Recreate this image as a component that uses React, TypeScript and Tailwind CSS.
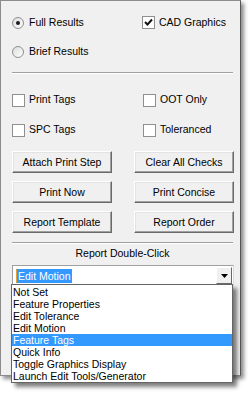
import React from "react";

const font = { fontFamily: '"Liberation Sans", Arial, sans-serif' };

function Radio({ checked, label }: { checked?: boolean; label: string }) {
  return (
    <label className="flex items-center gap-[5px]">
      <span className="relative w-[12px] h-[12px] rounded-full border border-[#8f8f8f] bg-gradient-to-br from-[#dcdcdc] to-white flex items-center justify-center">
        {checked && <span className="w-[4px] h-[4px] rounded-full bg-[#1a1a1a]" />}
      </span>
      <span>{label}</span>
    </label>
  );
}

function Check({ checked, label }: { checked?: boolean; label: string }) {
  return (
    <label className="flex items-center gap-[4px]">
      <span className="w-[13px] h-[13px] border border-[#8f8f8f] bg-white flex items-center justify-center">
        {checked && (
          <svg width="9" height="9" viewBox="0 0 9 9">
            <path d="M1 4 L3.5 6.5 L8 1.5" stroke="#111" strokeWidth="1.9" fill="none" />
          </svg>
        )}
      </span>
      <span>{label}</span>
    </label>
  );
}

function Btn({ label }: { label: string }) {
  return (
    <button className="w-[100px] h-[22px] bg-[#f0f0f0] border border-t-white border-l-white border-r-[#696969] border-b-[#696969] shadow-[inset_-1px_-1px_0_#a0a0a0,inset_1px_1px_0_#e3e3e3] text-black leading-none">
      {label}
    </button>
  );
}

function Sep() {
  return <div className="h-[2px] border-t border-[#a0a0a0] border-b border-b-white mr-[7px]" />;
}

const items = [
  "Not Set",
  "Feature Properties",
  "Edit Tolerance",
  "Edit Motion",
  "Feature Tags",
  "Quick Info",
  "Toggle Graphics Display",
  "Launch Edit Tools/Generator",
];

export default function App() {
  return (
    <div className="relative w-[250px] h-[394px] bg-white text-[10.5px] text-black" style={font}>
      <div className="w-[241px] h-[376px] bg-[#f0f0f0] border border-[#8c8c8c] border-r-[#555] shadow-[3px_3px_4px_rgba(0,0,0,0.45)] pl-[11px] flex flex-col">
        <div className="h-[42px] flex items-center justify-between pr-[14px] pt-[1px]">
          <Radio checked label="Full Results" />
          <Check checked label="CAD Graphics" />
        </div>
        <div className="h-[18px] flex items-center">
          <Radio label="Brief Results" />
        </div>
        <div className="mt-[11px]">
          <Sep />
        </div>
        <div className="mt-[16px] h-[20px] grid grid-cols-[131px_1fr] items-center">
          <Check label="Print Tags" />
          <Check label="OOT Only" />
        </div>
        <div className="mt-[10px] h-[20px] grid grid-cols-[131px_1fr] items-center">
          <Check label="SPC Tags" />
          <Check label="Toleranced" />
        </div>
        <div className="mt-[11px] flex flex-col gap-[8px]">
          <div className="flex gap-[22px]">
            <Btn label="Attach Print Step" />
            <Btn label="Clear All Checks" />
          </div>
          <div className="flex gap-[22px]">
            <Btn label="Print Now" />
            <Btn label="Print Concise" />
          </div>
          <div className="flex gap-[22px]">
            <Btn label="Report Template" />
            <Btn label="Report Order" />
          </div>
        </div>
        <div className="mt-[9px]">
          <Sep />
        </div>
        <div className="mt-[3px] h-[14px] flex items-center justify-center pr-[7px]">Report Double-Click</div>
        <div className="mt-[4px] w-[222px] h-[21px] bg-white border border-t-[#a0a0a0] border-l-[#a0a0a0] border-r-[#dcdcdc] border-b-[#dcdcdc] flex items-center pl-[3px] pr-[1px]">
          <span className="bg-[#3399ff] text-white h-[14px] leading-[14px] px-[1px] border-l border-l-[#e0a040]">Edit Motion</span>
          <span className="ml-auto w-[16px] h-[17px] bg-[#f0f0f0] border border-t-white border-l-white border-r-[#696969] border-b-[#696969] flex items-center justify-center">
            <svg width="7" height="4" viewBox="0 0 7 4">
              <path d="M0 0 H7 L3.5 4 Z" fill="#000" />
            </svg>
          </span>
        </div>
      </div>

      <div className="absolute left-[11px] top-[284px] w-[222px] bg-white border border-[#646464] pt-[1px] shadow-[4px_4px_4px_rgba(0,0,0,0.5)]">
        {items.map((it) => (
          <div
            key={it}
            className={
              "h-[12px] leading-[12px] pl-[1px] whitespace-nowrap " +
              (it === "Feature Tags" ? "bg-[#3399ff] text-white" : "")
            }
          >
            {it}
          </div>
        ))}
      </div>
    </div>
  );
}
